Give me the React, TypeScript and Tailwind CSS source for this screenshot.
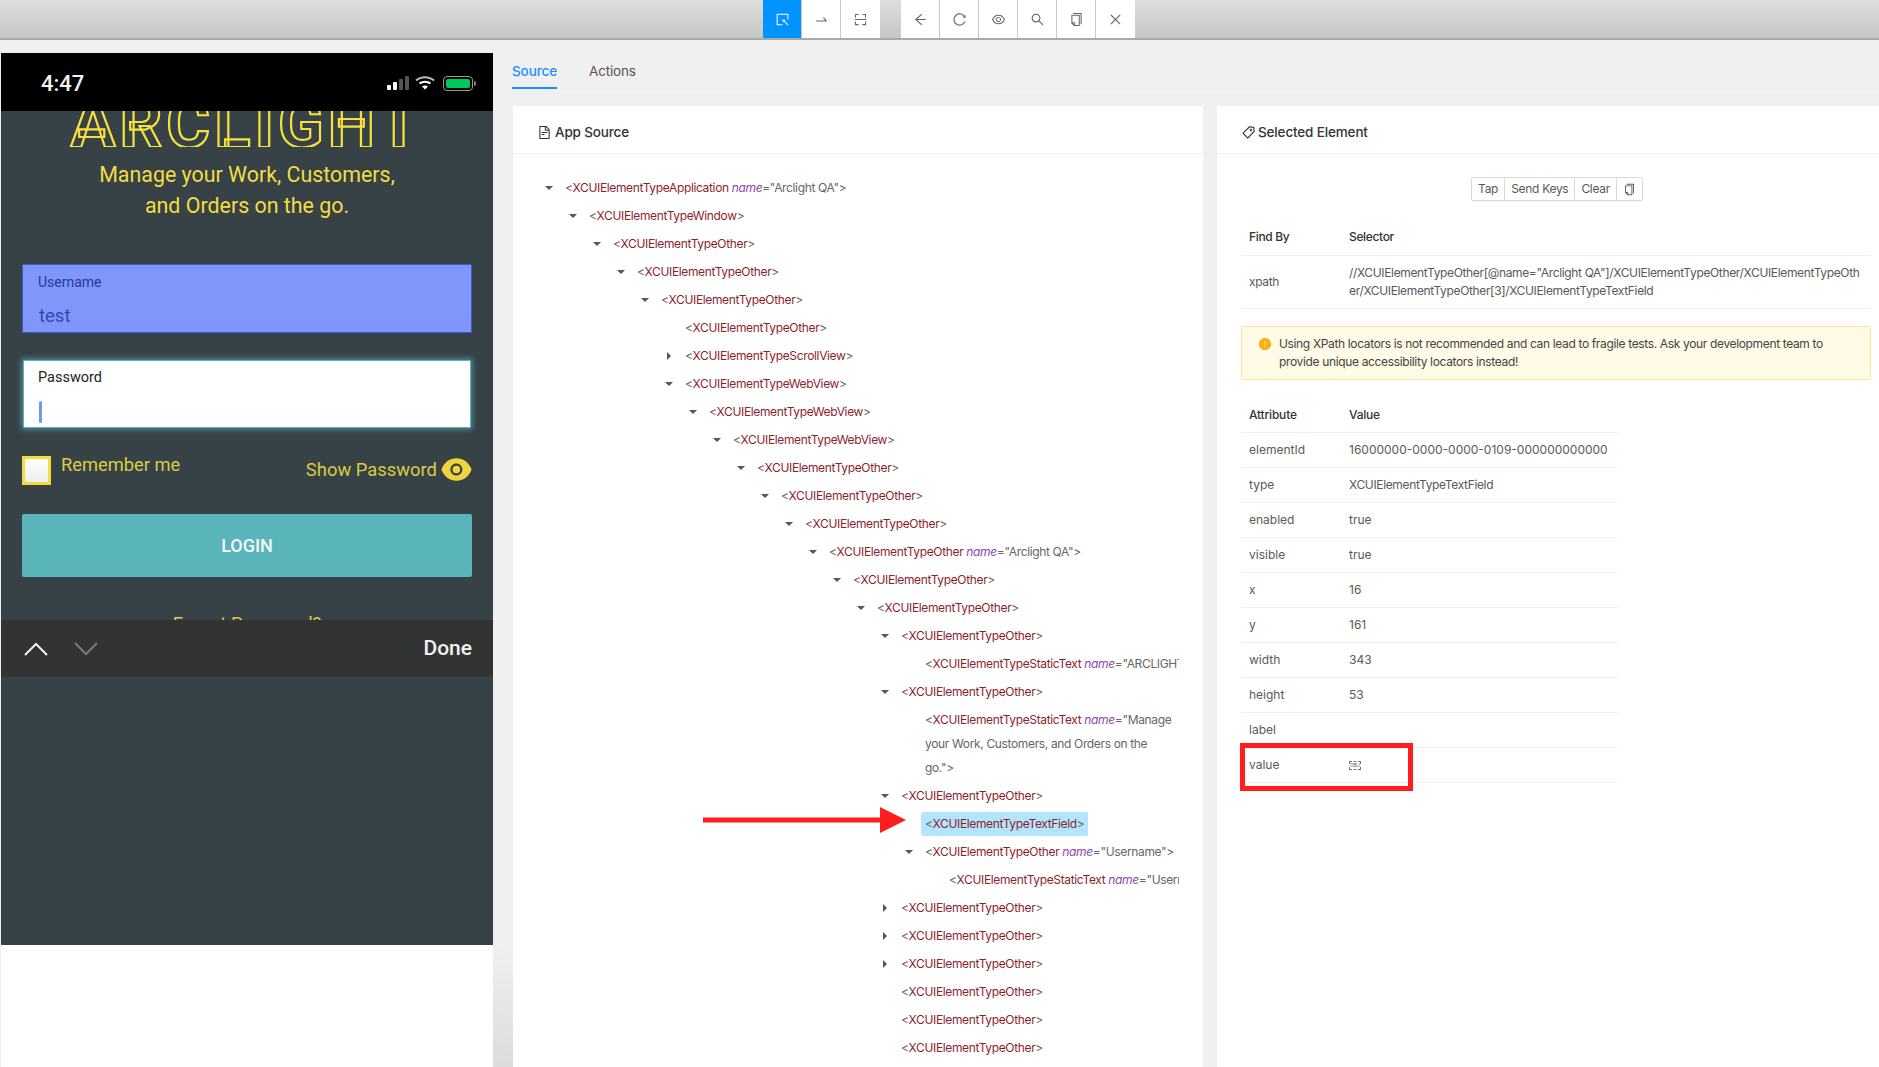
import React from 'react'
import {
    AiOutlineSelect,
    AiOutlineSwapRight,
    AiOutlineScan,
    AiOutlineArrowLeft,
    AiOutlineReload,
    AiOutlineEye,
    AiOutlineSearch,
    AiOutlineCopy,
    AiOutlineClose,
    AiOutlineFileText,
    AiOutlineTag,
    AiFillExclamationCircle,
    AiFillEye,
} from 'react-icons/ai'

interface TreeRow {
    level: number
    caret?: 'down' | 'right'
    tag: string
    name?: string
    selected?: boolean
    wrap?: boolean
}

const rows: TreeRow[] = [
    { level: 0, caret: 'down', tag: 'XCUIElementTypeApplication', name: 'Arclight QA' },
    { level: 1, caret: 'down', tag: 'XCUIElementTypeWindow' },
    { level: 2, caret: 'down', tag: 'XCUIElementTypeOther' },
    { level: 3, caret: 'down', tag: 'XCUIElementTypeOther' },
    { level: 4, caret: 'down', tag: 'XCUIElementTypeOther' },
    { level: 5, tag: 'XCUIElementTypeOther' },
    { level: 5, caret: 'right', tag: 'XCUIElementTypeScrollView' },
    { level: 5, caret: 'down', tag: 'XCUIElementTypeWebView' },
    { level: 6, caret: 'down', tag: 'XCUIElementTypeWebView' },
    { level: 7, caret: 'down', tag: 'XCUIElementTypeWebView' },
    { level: 8, caret: 'down', tag: 'XCUIElementTypeOther' },
    { level: 9, caret: 'down', tag: 'XCUIElementTypeOther' },
    { level: 10, caret: 'down', tag: 'XCUIElementTypeOther' },
    { level: 11, caret: 'down', tag: 'XCUIElementTypeOther', name: 'Arclight QA' },
    { level: 12, caret: 'down', tag: 'XCUIElementTypeOther' },
    { level: 13, caret: 'down', tag: 'XCUIElementTypeOther' },
    { level: 14, caret: 'down', tag: 'XCUIElementTypeOther' },
    { level: 15, tag: 'XCUIElementTypeStaticText', name: 'ARCLIGHT' },
    { level: 14, caret: 'down', tag: 'XCUIElementTypeOther' },
    { level: 15, tag: 'XCUIElementTypeStaticText', name: 'Manage your Work, Customers, and Orders on the go.', wrap: true },
    { level: 14, caret: 'down', tag: 'XCUIElementTypeOther' },
    { level: 15, tag: 'XCUIElementTypeTextField', selected: true },
    { level: 15, caret: 'down', tag: 'XCUIElementTypeOther', name: 'Username' },
    { level: 16, tag: 'XCUIElementTypeStaticText', name: 'Username' },
    { level: 14, caret: 'right', tag: 'XCUIElementTypeOther' },
    { level: 14, caret: 'right', tag: 'XCUIElementTypeOther' },
    { level: 14, caret: 'right', tag: 'XCUIElementTypeOther' },
    { level: 14, tag: 'XCUIElementTypeOther' },
    { level: 14, tag: 'XCUIElementTypeOther' },
    { level: 14, tag: 'XCUIElementTypeOther' },
]

const attributes: [string, string][] = [
    ['elementId', '16000000-0000-0000-0109-000000000000'],
    ['type', 'XCUIElementTypeTextField'],
    ['enabled', 'true'],
    ['visible', 'true'],
    ['x', '16'],
    ['y', '161'],
    ['width', '343'],
    ['height', '53'],
    ['label', ''],
]

const ToolButton = ({ children, active }: { children: React.ReactNode; active?: boolean }) => (
    <div
        className={`flex h-[38px] w-[39px] items-center justify-center border-r border-[#c8c8c8] text-[15px] last:border-r-0 ${
            active ? 'bg-[#0094ff] text-white' : 'bg-white text-[#666666]'
        }`}
    >
        {children}
    </div>
)

const Toolbar = () => (
    <div className="flex h-10 shrink-0 justify-center border-b-2 border-[#a9a9a9] bg-gradient-to-b from-[#dedede] to-[#c6c6c6] pl-[763px]">
        <div className="flex w-full">
            <div className="flex">
                <ToolButton active>
                    <AiOutlineSelect />
                </ToolButton>
                <ToolButton>
                    <AiOutlineSwapRight />
                </ToolButton>
                <ToolButton>
                    <AiOutlineScan />
                </ToolButton>
            </div>
            <div className="ml-[21px] flex">
                <ToolButton>
                    <AiOutlineArrowLeft />
                </ToolButton>
                <ToolButton>
                    <AiOutlineReload />
                </ToolButton>
                <ToolButton>
                    <AiOutlineEye />
                </ToolButton>
                <ToolButton>
                    <AiOutlineSearch />
                </ToolButton>
                <ToolButton>
                    <AiOutlineCopy />
                </ToolButton>
                <ToolButton>
                    <AiOutlineClose />
                </ToolButton>
            </div>
        </div>
    </div>
)

const StatusIcons = () => (
    <div className="flex items-center">
        <svg width="23" height="14" viewBox="0 0 23 14">
            <rect x="0" y="9" width="4" height="5" rx="1" fill="#fff" />
            <rect x="6" y="6" width="4" height="8" rx="1" fill="#fff" />
            <rect x="12" y="3" width="4" height="11" rx="1" fill="#555" />
            <rect x="18" y="0" width="4" height="14" rx="1" fill="#555" />
        </svg>
        <svg className="ml-[5px]" width="20" height="14" viewBox="0 0 20 14" fill="none">
            <path d="M1 4.5C6 0 14 0 19 4.5" stroke="#bbb" strokeWidth="2" />
            <path d="M4.5 7.5C7.5 5 12.5 5 15.5 7.5" stroke="#fff" strokeWidth="2" />
            <path d="M7 10.5L10 13.5L13 10.5C11.5 9.2 8.5 9.2 7 10.5Z" fill="#fff" />
        </svg>
        <div className="ml-2 flex h-[15px] w-[30px] rounded-[4px] border border-[#999999] p-[2px]">
            <div className="flex-1 rounded-[2px] bg-[#00c85a]" />
        </div>
        <div className="ml-px h-[5px] w-[2px] rounded-r-sm bg-[#888888]" />
    </div>
)

const Phone = () => (
    <div className="flex h-[892px] w-[492px] flex-col bg-[#374246] font-[Roboto,sans-serif]">
        <div className="flex h-[58px] shrink-0 items-center justify-between bg-black pl-10 pr-[17px] pt-[2px]">
            <span className="text-[22px] font-medium text-[#f2f2f2]">4:47</span>
            <StatusIcons />
        </div>
        <div className="flex h-9 shrink-0 items-end justify-center overflow-hidden">
            <span className="text-[67px] font-bold leading-[45px] tracking-[4px] text-transparent [-webkit-text-stroke:2.2px_#f7df3d]">
                ARCLIGHT
            </span>
        </div>
        <p className="mt-3 text-center text-[21.4px] leading-[31px] text-[#f2dc43]">
            Manage your Work, Customers,
            <br />
            and Orders on the go.
        </p>
        <div className="mx-[21px] mt-[43px] h-[69px] shrink-0 rounded-[1px] border border-[#3f56d6] bg-[#7f96fb] px-[15px] pt-[7px]">
            <div className="text-[14px] leading-5 text-[#27399f]">Username</div>
            <div className="mt-[12px] pl-px text-[18.5px] leading-6 text-[#3148b4]">test</div>
        </div>
        <div className="mx-[22px] mt-[27px] h-[68px] shrink-0 rounded-[1px] border border-[#5ab5ba] bg-white px-[14px] pt-[7px] shadow-[0_0_5px_2px_rgba(90,200,215,0.5)]">
            <div className="text-[14.5px] leading-5 text-[#222222]">Password</div>
            <div className="ml-px mt-[13px] h-[22px] w-[3px] rounded-sm bg-[#7396ea]" />
        </div>
        <div className="mx-[21px] mt-[28px] flex h-7 shrink-0 items-start justify-between">
            <div className="flex items-start">
                <div className="h-[29px] w-[29px] border-[3px] border-[#f5dc3c] bg-gradient-to-b from-white to-[#eeeeee]" />
                <span className="ml-[10px] text-[18.3px] leading-[18px] text-[#d9cb45]">Remember me</span>
            </div>
            <div className="-mr-[2px] -mt-[4px] flex items-center">
                <span className="text-[18.4px] leading-[28px] text-[#d9cb45]">Show Password</span>
                <AiFillEye className="ml-[2px] text-[35px] text-[#eed53d]" />
            </div>
        </div>
        <div className="mx-[21px] mt-[30px] flex h-[63px] shrink-0 items-center justify-center rounded-[2px] bg-[#5ab5ba] text-[18px] font-medium text-[#f4f8f8]">
            LOGIN
        </div>
        <div className="h-[43px] shrink-0 overflow-hidden pt-[35px] text-center text-[18.5px] leading-6 text-[#d9cb45]">
            Forgot Password?
        </div>
        <div className="flex h-[57px] shrink-0 items-center justify-between bg-[#323433] pl-[23px] pr-[21px]">
            <div className="flex items-center gap-[26px]">
                <svg width="24" height="14" viewBox="0 0 24 14" fill="none">
                    <path d="M1 13L12 2L23 13" stroke="#f2f2f2" strokeWidth="2" />
                </svg>
                <svg width="24" height="14" viewBox="0 0 24 14" fill="none">
                    <path d="M1 1L12 12L23 1" stroke="#7a7a7a" strokeWidth="2" />
                </svg>
            </div>
            <span className="text-[21px] font-medium text-[#f2f2f2]">Done</span>
        </div>
    </div>
)

const Row = ({ row }: { row: TreeRow }) => (
    <div className="flex items-start pb-1">
        <div className="shrink-0" style={{ width: row.level * 24 }} />
        <div className="flex h-6 w-6 shrink-0 items-center justify-center">
            {row.caret === 'down' && <div className="h-0 w-0 border-x-[4px] border-t-[4px] border-x-transparent border-t-[#555555]" />}
            {row.caret === 'right' && <div className="h-0 w-0 border-y-[4px] border-l-[4px] border-y-transparent border-l-[#555555]" />}
        </div>
        <div
            className={`min-w-0 rounded-[2px] px-1 text-[12px] leading-6 tracking-[-0.35px] text-[#666666] ${
                row.wrap ? '' : 'whitespace-nowrap'
            } ${row.selected ? 'bg-[#b3e5fc]' : ''}`}
        >
            &lt;<span className="text-[#8f1d2c]">{row.tag}</span>
            {row.name && (
                <>
                    {' '}
                    <i className="text-[#8e44ad]">name</i>="{row.name}"
                </>
            )}
            &gt;
        </div>
    </div>
)

const SourcePanel = () => (
    <div className="relative flex h-full w-[690px] shrink-0 flex-col overflow-hidden bg-white">
        <div className="flex h-[48px] shrink-0 items-center gap-[3px] border-b border-[#f0f0f0] pl-6 pt-[6px] text-[13.5px] font-medium tracking-[-0.15px] text-[#333333]">
            <AiOutlineFileText className="text-[15px]" />
            App Source
        </div>
        <div className="ml-6 w-[642px] overflow-hidden pt-[22px]">
            {rows.map((row, i) => (
                <Row key={i} row={row} />
            ))}
        </div>
        {/* red annotation arrow */}
        <svg className="absolute left-[190px] top-[701px]" width="203" height="26" viewBox="0 0 203 26">
            <rect x="0" y="10.5" width="178" height="5" fill="#ff1d1d" />
            <polygon points="177,0 203,13 177,26" fill="#ff1d1d" />
        </svg>
    </div>
)

const ActionButton = ({ children }: { children: React.ReactNode }) => (
    <div className="flex h-full items-center border-r border-[#d9d9d9] px-[6px] last:border-r-0">{children}</div>
)

const ElementPanel = () => (
    <div className="flex h-full flex-1 flex-col bg-white text-[12px] text-[#595959]">
        <div className="flex h-[48px] shrink-0 items-center gap-[2px] border-b border-[#f0f0f0] pl-6 pt-[6px] text-[13.5px] font-medium tracking-[-0.15px] text-[#333333]">
            <AiOutlineTag className="text-[15px]" />
            Selected Element
        </div>
        <div className="flex justify-center pt-[23px] tracking-[-0.3px]">
            <div className="ml-[2px] flex h-[24px] items-center rounded-[2px] border border-[#d9d9d9] shadow-[0_1px_0_rgba(0,0,0,0.03)]">
                <ActionButton>Tap</ActionButton>
                <ActionButton>Send Keys</ActionButton>
                <ActionButton>Clear</ActionButton>
                <ActionButton>
                    <AiOutlineCopy className="text-[13px]" />
                </ActionButton>
            </div>
        </div>
        <div className="mx-6 mt-[18px] w-[630px] tracking-[-0.35px]">
            <div className="flex h-[37px] items-center border-b border-[#f0f0f0] font-medium text-[#333333]">
                <div className="w-[108px] pl-2">Find By</div>
                <div>Selector</div>
            </div>
            <div className="flex h-[53px] items-center border-b border-[#f0f0f0]">
                <div className="w-[108px] shrink-0 pl-2">xpath</div>
                <div className="break-all pr-2 leading-[18px]">
                    //XCUIElementTypeOther[@name="Arclight QA"]/XCUIElementTypeOther/XCUIElementTypeOther/XCUIElementTypeOther[3]/XCUIElementTypeTextField
                </div>
            </div>
            <div className="mt-[17px] flex h-[54px] items-start rounded-[2px] border border-[#ffe58f] bg-[#fffbe6] pl-4 pt-[8px] leading-[18px] text-[#444444]">
                <AiFillExclamationCircle className="mt-[2px] shrink-0 text-[14px] text-[#faad14]" />
                <div className="ml-[7px] w-[570px]">
                    Using XPath locators is not recommended and can lead to fragile tests. Ask your development team to provide unique accessibility locators instead!
                </div>
            </div>
        </div>
        <div className="relative mx-6 mt-[18px] w-[377px]">
            <div className="flex h-[35px] items-center border-b border-[#f0f0f0] font-medium tracking-[-0.2px] text-[#333333]">
                <div className="w-[108px] pl-2">Attribute</div>
                <div>Value</div>
            </div>
            {attributes.map(([name, value]) => (
                <div key={name} className="flex h-[35px] items-center border-b border-[#f0f0f0]">
                    <div className="w-[108px] pl-2">{name}</div>
                    <div className={name === 'type' ? 'tracking-[-0.35px]' : ''}>{value}</div>
                </div>
            ))}
            <div className="flex h-[35px] items-center border-b border-[#f0f0f0]">
                <div className="w-[108px] pl-2">value</div>
                <div className="flex h-[9px] w-3 items-center justify-center border border-dashed border-[#777777] text-[5px] leading-none">OBJ</div>
            </div>
            {/* red annotation box */}
            <div className="absolute bottom-[-8px] left-[-1px] h-[48px] w-[173px] border-[5px] border-[#ff1d1d]" />
        </div>
    </div>
)

const App: React.FC = () => {
    return (
        <div className="flex h-[1067px] w-full flex-col overflow-hidden bg-[#f0f0f0] font-[Inter,sans-serif]">
            <Toolbar />
            <div className="flex min-h-0 flex-1">
                <div className="ml-px mt-[13px] w-[492px] shrink-0 bg-white">
                    <Phone />
                </div>
                <div className="w-5 shrink-0 bg-gradient-to-b from-[#f0f0f0] from-[88%] to-[#dcdcdc]" />
                <div className="flex min-w-0 flex-1 flex-col">
                    <div className="mb-[17px] flex h-[49px] shrink-0 items-start gap-[32px] border-b border-[#ebebeb] text-[13.5px]">
                        <div className="-ml-px mt-5 h-[29px] border-b-2 border-[#1890ff] font-medium leading-[22px] tracking-[-0.1px] text-[#1890ff]">Source</div>
                        <div className="mt-5 leading-[22px] tracking-[-0.2px] text-[#555555]">Actions</div>
                    </div>
                    <div className="flex min-h-0 flex-1 gap-[14px]">
                        <SourcePanel />
                        <ElementPanel />
                    </div>
                </div>
            </div>
        </div>
    )
}

export default App
